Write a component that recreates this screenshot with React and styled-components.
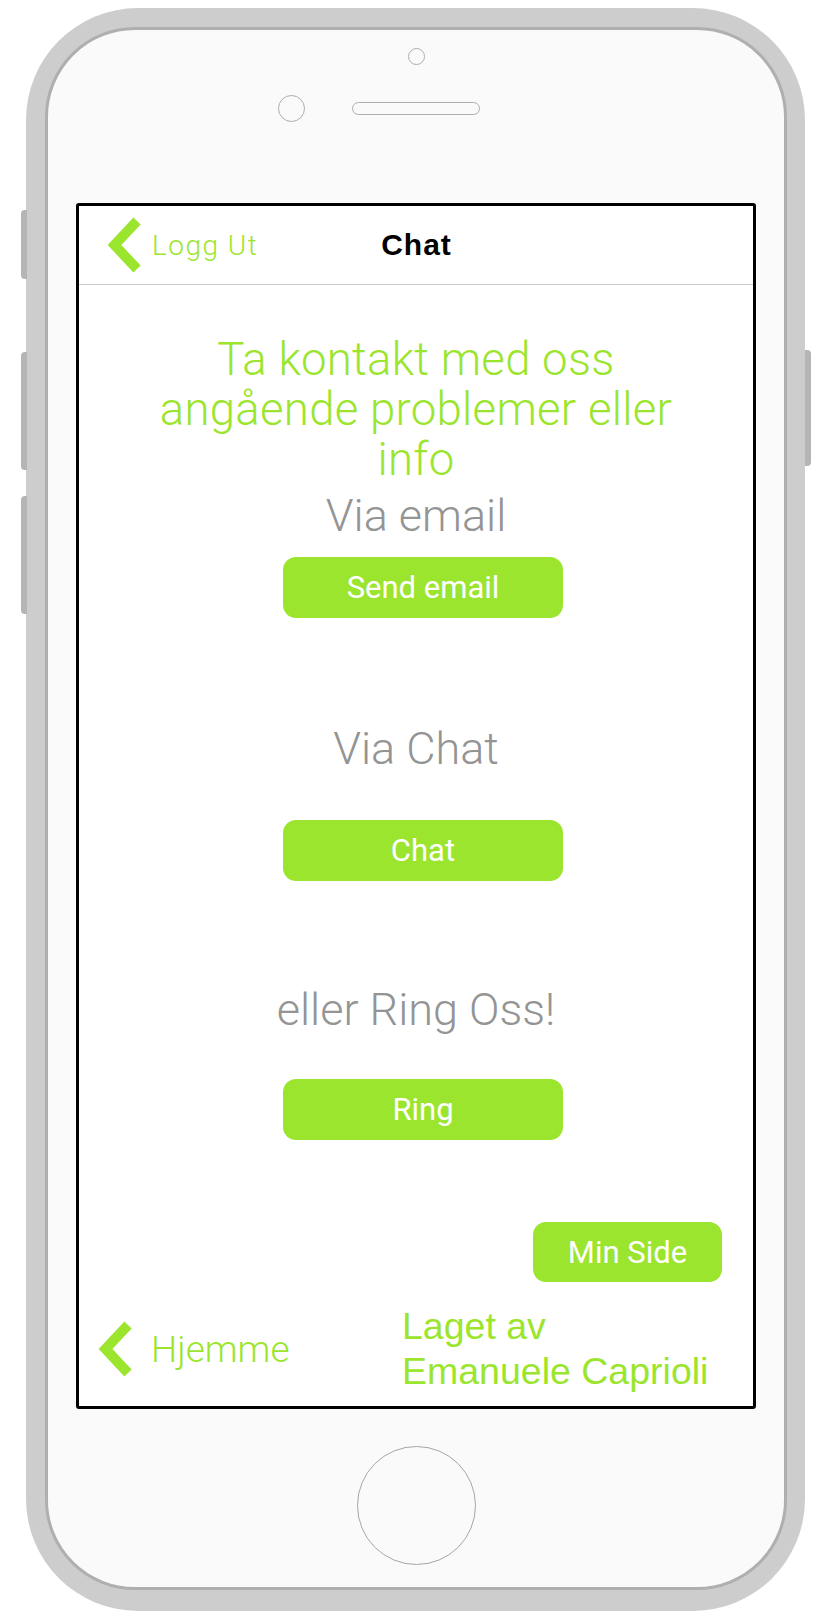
import React from "react";
import styled, { createGlobalStyle } from "styled-components";

const GREEN = "#9be52e";
const GRAY = "#949494";

const GlobalStyle = createGlobalStyle`
  body {
    margin: 0;
    background: #ffffff;
    font-family: Roboto, "Liberation Sans", sans-serif;
  }
`;

const Page = styled.div`
  padding: 8px 0 0 26px;
`;

const PhoneBody = styled.div`
  position: relative;
  width: 779px;
  height: 1603px;
  box-sizing: border-box;
  padding: 19px 18px 21px 19px;
  background: #cdcdcd;
  border-radius: 112px;
`;

const SideKey = styled.div`
  position: absolute;
  top: ${(p) => p.$top}px;
  height: ${(p) => p.$h}px;
  width: 6px;
  background: #b5b5b5;
  ${(p) =>
    p.$right
      ? "right: -6px; border-radius: 0 4px 4px 0;"
      : "left: -5px; border-radius: 4px 0 0 4px;"}
`;

const Face = styled.div`
  width: 742px;
  height: 1563px;
  box-sizing: border-box;
  border: 3px solid #afafaf;
  border-radius: 90px;
  background: #fafafa;
  display: flex;
  flex-direction: column;
  align-items: center;
`;

const Camera = styled.div`
  margin-top: 18px;
  width: 17px;
  height: 17px;
  box-sizing: border-box;
  border: 1.5px solid #adadad;
  border-radius: 50%;
`;

const EarRow = styled.div`
  margin-top: 30px;
  width: 100%;
  display: grid;
  grid-template-columns: 1fr auto 1fr;
  align-items: center;
`;

const Sensor = styled.div`
  justify-self: end;
  margin-right: 47px;
  width: 27px;
  height: 27px;
  box-sizing: border-box;
  border: 1.5px solid #adadad;
  border-radius: 50%;
`;

const Speaker = styled.div`
  width: 128px;
  height: 13px;
  box-sizing: border-box;
  border: 1.5px solid #adadad;
  border-radius: 7px;
`;

const Screen = styled.div`
  margin-top: 81px;
  width: 680px;
  height: 1206px;
  box-sizing: border-box;
  border: 3px solid #000;
  border-radius: 3px;
  background: #fff;
  display: flex;
  flex-direction: column;
`;

const HomeButton = styled.div`
  margin-top: 37px;
  width: 119px;
  height: 119px;
  box-sizing: border-box;
  border: 1.5px solid #a6a6a6;
  border-radius: 50%;
`;

const NavBar = styled.div`
  height: 79px;
  box-sizing: border-box;
  border-bottom: 1px solid #cbcbcb;
  display: grid;
  grid-template-columns: 1fr auto 1fr;
  align-items: center;
  padding-left: 27px;
`;

const BackLink = styled.div`
  display: flex;
  align-items: center;
  gap: ${(p) => p.$gap}px;
  color: ${GREEN};
  font-weight: 300;
  font-size: ${(p) => p.$size}px;
  letter-spacing: ${(p) => p.$spacing || 0}px;
`;

const Title = styled.div`
  font-family: "Liberation Sans", Arial, sans-serif;
  font-weight: 700;
  font-size: 30px;
  letter-spacing: 1px;
  color: #000;
  margin-left: -26px;
`;

const Content = styled.div`
  display: flex;
  flex-direction: column;
  align-items: center;
`;

const Heading = styled.h1`
  margin: 50px 0 0;
  font-weight: 300;
  font-size: 45.5px;
  line-height: 50px;
  letter-spacing: 0.3px;
  color: ${GREEN};
  text-align: center;
`;

const Subtitle = styled.div`
  margin-top: ${(p) => p.$top}px;
  font-weight: 300;
  font-size: 45px;
  line-height: 50px;
  color: ${GRAY};
`;

const Button = styled.button`
  margin-top: ${(p) => p.$top}px;
  width: ${(p) => p.$w}px;
  height: ${(p) => p.$h}px;
  border: none;
  border-radius: 13px;
  background: ${GREEN};
  color: #fff;
  font-family: Roboto, "Liberation Sans", sans-serif;
  font-size: 31px;
  font-weight: 400;
  display: flex;
  align-items: center;
  justify-content: center;
  padding: 0;
`;

const ActionButton = styled(Button)`
  margin-left: 14px;
`;

const CornerButton = styled(Button)`
  align-self: flex-end;
  margin-right: 31px;
`;

const Footer = styled.div`
  margin-top: 22px;
  padding-left: 18px;
  display: flex;
  align-items: center;
`;

const FooterBack = styled.div`
  flex: 0 0 305px;
`;

const Credit = styled.div`
  font-family: "Liberation Sans", Arial, sans-serif;
  font-size: 37.5px;
  line-height: 45px;
  color: ${GREEN};
`;

const Chevron = () => (
  <svg width="36" height="58" viewBox="0 0 36 58">
    <polyline
      points="31,5 8.5,29 31,53"
      fill="none"
      stroke={GREEN}
      strokeWidth="10"
      strokeLinejoin="miter"
      strokeMiterlimit="4"
    />
  </svg>
);

const sections = [
  { label: "Via email", labelTop: 6, button: "Send email", buttonTop: 16 },
  { label: "Via Chat", labelTop: 106, button: "Chat", buttonTop: 46 },
  { label: "eller Ring Oss!", labelTop: 104, button: "Ring", buttonTop: 44 },
];

export default function App() {
  return (
    <Page>
      <GlobalStyle />
      <PhoneBody>
        <SideKey $top={202} $h={69} />
        <SideKey $top={344} $h={118} />
        <SideKey $top={488} $h={118} />
        <SideKey $right $top={342} $h={116} />
        <Face>
          <Camera />
          <EarRow>
            <Sensor />
            <Speaker />
          </EarRow>
          <Screen>
            <NavBar>
              <BackLink $gap={10} $size={28} $spacing={1.5}>
                <Chevron />
                Logg Ut
              </BackLink>
              <Title>Chat</Title>
            </NavBar>
            <Content>
              <Heading>
                Ta kontakt med oss
                <br />
                angående problemer eller
                <br />
                info
              </Heading>
              {sections.map((s) => (
                <React.Fragment key={s.button}>
                  <Subtitle $top={s.labelTop}>{s.label}</Subtitle>
                  <ActionButton $top={s.buttonTop} $w={280} $h={61}>
                    {s.button}
                  </ActionButton>
                </React.Fragment>
              ))}
              <CornerButton $top={82} $w={189} $h={60}>
                Min Side
              </CornerButton>
            </Content>
            <Footer>
              <FooterBack>
                <BackLink $gap={18} $size={37}>
                  <Chevron />
                  Hjemme
                </BackLink>
              </FooterBack>
              <Credit>
                Laget av
                <br />
                Emanuele Caprioli
              </Credit>
            </Footer>
          </Screen>
          <HomeButton />
        </Face>
      </PhoneBody>
    </Page>
  );
}
